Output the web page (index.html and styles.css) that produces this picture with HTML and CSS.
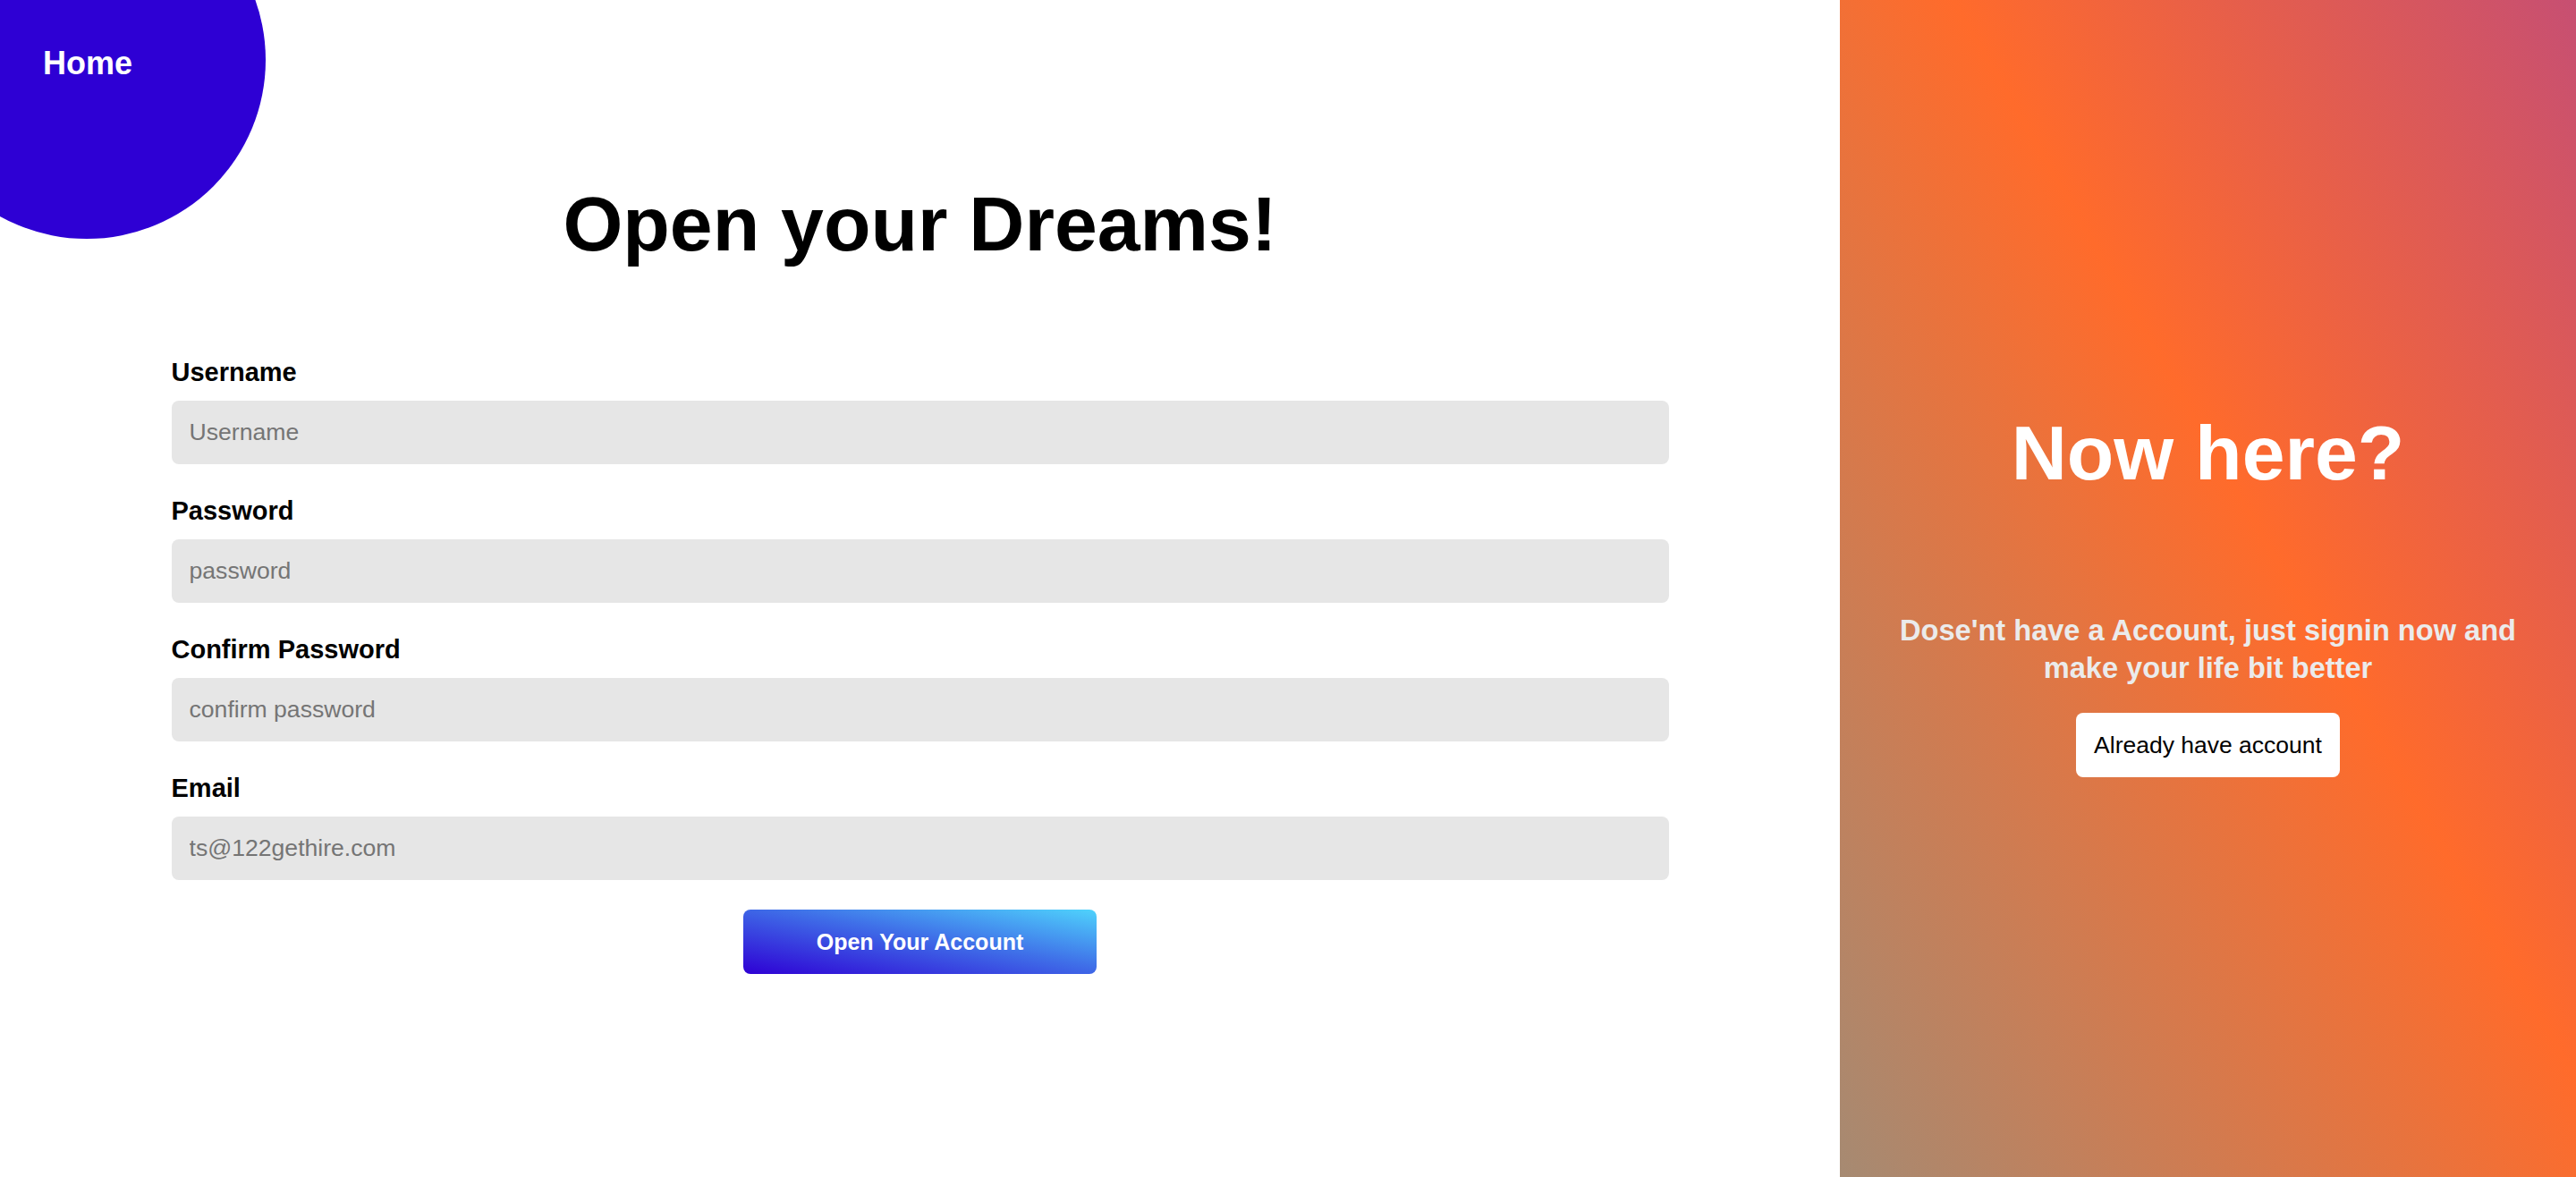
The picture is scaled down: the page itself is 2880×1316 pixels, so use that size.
FILE: index.html
```html
<!DOCTYPE html>
<html lang="en">
<head>
<meta charset="utf-8">
<title>Open your Dreams!</title>
<link rel="stylesheet" href="styles.css">
</head>
<body>
<div class="page">
  <section class="left">
    <div class="blob"><a class="home" href="#">Home</a></div>
    <h1 class="title">Open your Dreams!</h1>
    <form class="form">
      <div class="field">
        <label class="label" for="u">Username</label>
        <input class="input" id="u" type="text" placeholder="Username">
      </div>
      <div class="field">
        <label class="label" for="p">Password</label>
        <input class="input" id="p" type="password" placeholder="password">
      </div>
      <div class="field">
        <label class="label" for="c">Confirm Password</label>
        <input class="input" id="c" type="password" placeholder="confirm password">
      </div>
      <div class="field field-last">
        <label class="label" for="e">Email</label>
        <input class="input" id="e" type="email" placeholder="ts@122gethire.com">
      </div>
      <button class="submit" type="button">Open Your Account</button>
    </form>
  </section>
  <aside class="right">
    <h2 class="side-title">Now here?</h2>
    <p class="side-text">Dose'nt have a Account, just signin now and make your life bit better</p>
    <button class="side-btn" type="button">Already have account</button>
  </aside>
</div>
</body>
</html>
```
FILE: styles.css
```css
html, body {
  margin: 0;
  padding: 0;
  height: 100%;
  background: #ffffff;
  overflow: hidden;
}

* {
  box-sizing: border-box;
}

body {
  font-family: "Liberation Sans", Arial, sans-serif;
  color: #000000;
}

.page {
  display: flex;
  height: 1316px;
  width: 2880px;
}

.left {
  position: relative;
  flex: 0 0 2057px;
  display: flex;
  flex-direction: column;
  align-items: center;
  padding-top: 201px;
  overflow: hidden;
}

.blob {
  position: absolute;
  left: -103px;
  top: -133px;
  width: 400px;
  height: 400px;
  border-radius: 50%;
  background: #2e00d4;
  padding: 183px 0 0 151px;
}

.home {
  display: block;
  color: #ffffff;
  text-decoration: none;
  font-weight: bold;
  font-size: 36px;
  line-height: 41px;
}

.title {
  margin: 0;
  font-size: 86px;
  font-weight: bold;
  line-height: normal;
}

.form {
  width: 1674px;
  margin-top: 100px;
  display: flex;
  flex-direction: column;
}

.field {
  display: flex;
  flex-direction: column;
  margin-bottom: 36px;
}

.field-last {
  margin-bottom: 33px;
}

.label {
  font-size: 29px;
  font-weight: bold;
  line-height: 32px;
  margin-bottom: 16px;
}

.input {
  height: 71px;
  border: 0;
  border-radius: 8px;
  background: #e6e6e6;
  padding: 0 20px;
  font-family: "Liberation Sans", Arial, sans-serif;
  font-size: 26.6px;
  color: #222222;
  outline: none;
}

.input::placeholder {
  color: #757575;
}

.submit {
  align-self: center;
  width: 395px;
  height: 72px;
  border: 0;
  border-radius: 8px;
  background: linear-gradient(to top right, #2e00d4 0%, #3f6fe8 55%, #4fd3fc 100%);
  color: #ffffff;
  font-family: "Liberation Sans", Arial, sans-serif;
  font-weight: bold;
  font-size: 25px;
}

.right {
  flex: 1 1 auto;
  display: flex;
  flex-direction: column;
  align-items: center;
  justify-content: center;
  text-align: center;
  padding: 10px 59px 0;
  background: linear-gradient(60deg, #a68a72 0%, #ff6b2b 56%, #c74f72 100%);
}

.side-title {
  margin: 0;
  color: #ffffff;
  font-size: 86px;
  font-weight: bold;
  line-height: normal;
}

.side-text {
  margin: 128px 0 0;
  color: #ebebeb;
  font-size: 32.6px;
  font-weight: bold;
  line-height: 42px;
}

.side-btn {
  margin-top: 29px;
  height: 72px;
  padding: 0 20px;
  border: 0;
  border-radius: 8px;
  background: #ffffff;
  color: #000000;
  font-family: "Liberation Sans", Arial, sans-serif;
  font-size: 26.5px;
}
```
